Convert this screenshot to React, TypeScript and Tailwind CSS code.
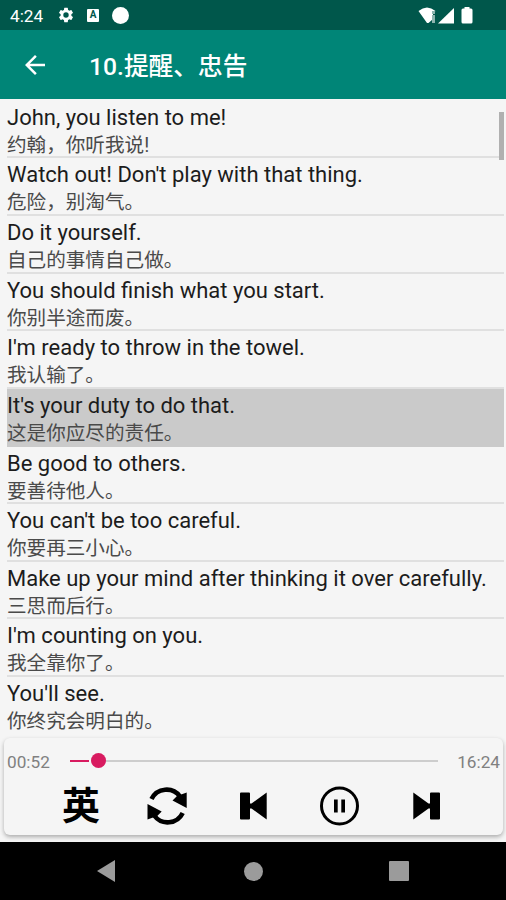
import React from 'react';

interface Sentence {
  en: string;
  zh: string;
}

const sentences: Sentence[] = [
  { en: 'John, you listen to me!', zh: '约翰，你听我说!' },
  { en: "Watch out! Don't play with that thing.", zh: '危险，别淘气。' },
  { en: 'Do it yourself.', zh: '自己的事情自己做。' },
  { en: 'You should finish what you start.', zh: '你别半途而废。' },
  { en: "I'm ready to throw in the towel.", zh: '我认输了。' },
  { en: "It's your duty to do that.", zh: '这是你应尽的责任。' },
  { en: 'Be good to others.', zh: '要善待他人。' },
  { en: "You can't be too careful.", zh: '你要再三小心。' },
  { en: 'Make up your mind after thinking it over carefully.', zh: '三思而后行。' },
  { en: "I'm counting on you.", zh: '我全靠你了。' },
  { en: "You'll see.", zh: '你终究会明白的。' },
];

const activeIndex = 5;

function StatusBar() {
  return (
    <div className="flex h-[30px] shrink-0 items-center bg-[#00574b] pl-[10px] pr-[33px] text-white">
      <span className="w-[46px] pt-[3px] text-[17.200px] leading-none">4:24</span>
      <svg className="ml-px h-[18px] w-[18px]" viewBox="0 0 24 24" fill="currentColor">
        <path d="M19.14 12.94c.04-.3.06-.61.06-.94s-.02-.64-.07-.94l2.03-1.58a.49.49 0 0 0 .12-.61l-1.92-3.32a.49.49 0 0 0-.59-.22l-2.39.96c-.5-.38-1.03-.7-1.62-.94l-.36-2.54a.48.48 0 0 0-.48-.41h-3.84a.47.47 0 0 0-.47.41l-.36 2.54c-.59.24-1.13.57-1.62.94l-2.39-.96a.48.48 0 0 0-.59.22L2.74 8.87a.47.47 0 0 0 .12.61l2.03 1.58c-.05.3-.09.63-.09.94s.02.64.07.94l-2.03 1.58a.49.49 0 0 0-.12.61l1.92 3.32c.12.22.37.29.59.22l2.39-.96c.5.38 1.03.7 1.62.94l.36 2.54c.05.24.24.41.48.41h3.84c.24 0 .44-.17.47-.41l.36-2.54c.59-.24 1.13-.56 1.62-.94l2.39.96c.22.08.47 0 .59-.22l1.92-3.32a.47.47 0 0 0-.12-.61zM12 15.6a3.6 3.6 0 1 1 0-7.2 3.6 3.6 0 0 1 0 7.2z" />
      </svg>
      <span className="ml-[12px] flex h-[13px] w-[12px] items-center justify-center rounded-[1px] bg-white text-[10px] font-bold leading-none text-[#00574b]">
        A
      </span>
      <span className="ml-[13px] h-[17px] w-[17px] rounded-full bg-white" />
      <svg className="ml-auto h-[18px] w-[56px]" viewBox="0 0 56 18">
        <path d="M1.500 5Q10 -2 18.500 5L16 7V13L11.500 17H10Z" fill="#fff" />
        <path d="M15 5h3v3h-3zM15 9h3v8h-3z" fill="#8fb5af" />
        <path d="M21 17.500L37 2V17.500Z" fill="#fff" />
        <path d="M47.500 1h5v1.500h1.500a1.500 1.500 0 0 1 1.500 1.500v12a1.500 1.500 0 0 1-1.500 1.500h-8a1.500 1.500 0 0 1-1.500-1.500v-12a1.500 1.500 0 0 1 1.500-1.500h1.500z" fill="#fff" />
      </svg>
    </div>
  );
}

function Toolbar() {
  return (
    <header className="flex h-[69px] shrink-0 items-center bg-[#008577] pl-[20px] text-white">
      <svg className="h-[30px] w-[30px]" viewBox="0 0 24 24" fill="currentColor">
        <path d="M20 11H7.830l5.590-5.590L12 4l-8 8 8 8 1.410-1.410L7.830 13H20v-2z" />
      </svg>
      <h1 className="ml-[39px] pt-[5px] text-[24.700px] font-medium leading-none">10.提醒、忠告</h1>
    </header>
  );
}

function SentenceRow({ sentence, active }: { sentence: Sentence; active: boolean }) {
  return (
    <li
      className={`h-[57.650px] border-b-2 pt-[3px] whitespace-nowrap last:border-transparent ${
        active ? 'border-[#cacaca] bg-[#cacaca]' : 'border-[#e0e0e0]'
      }`}
    >
      <p className="text-[22px] leading-[27px] text-[#1c1c1c]">{sentence.en}</p>
      <p className="mt-px text-[19.600px] leading-[28px] text-[#4a4a4a]">{sentence.zh}</p>
    </li>
  );
}

function Player() {
  return (
    <section className="ml-[4px] mr-[3px] h-[97px] shrink-0 rounded-[6px] bg-[#f5f5f5] shadow-[0_2px_4px_rgba(0,0,0,0.3)]">
      <div className="flex h-[45px] items-center pl-[3px] pr-[3px] text-[17.200px] text-[#808080]">
        <span className="w-[63px] pt-1">00:52</span>
        <div className="flex flex-1 items-center">
          <span className="h-[2px] w-[19px] bg-[#d81b60]" />
          <span className="ml-[2px] h-[15px] w-[15px] rounded-full bg-[#d81b60]" />
          <span className="h-[2px] flex-1 bg-[#cdcdcd]" />
        </div>
        <span className="w-[62px] pt-1 text-right">16:24</span>
      </div>
      <div className="flex h-[45px] items-center text-black">
        <button className="ml-[57px] w-[40px] text-[38px] font-bold leading-none">英</button>
        <svg className="ml-[46px] h-[40px] w-[40px]" viewBox="0 0 40 40">
          <path d="M4.500 13A16.700 16.700 0 0 1 33 10.500" fill="none" stroke="#000" strokeWidth="4.600" />
          <path d="M35.700 27A16.700 16.700 0 0 1 7.200 29.500" fill="none" stroke="#000" strokeWidth="4.600" />
          <path d="M39.700 6.500V22L25.500 14.500L30 10ZM.5 18L14.700 25.500L10.200 30L.5 33.500Z" />
        </svg>
        <svg className="ml-[52px] h-[28px] w-[28px]" viewBox="0 0 28 28">
          <path d="M2 .5H10Q11 .5 11 1.500V11.500H12.500L27.700 .5V27.500L12.500 16.500H11V26.500Q11 27.500 10 27.500H2Q1 27.500 1 26.500V1.500Q1 .5 2 .5Z" />
        </svg>
        <svg className="ml-[52px] h-[40px] w-[40px]" viewBox="0 0 40 40">
          <circle cx="20.500" cy="20" r="18" fill="none" stroke="#000" strokeWidth="3" />
          <path d="M15 13.500h3.700v13H15zM22.300 13.500h3.700v13h-3.700z" />
        </svg>
        <svg className="ml-[53px] h-[28px] w-[28px]" viewBox="0 0 28 28">
          <path d="M27 .5H19Q18 .5 18 1.500V11.500H16.500L1.300 .5V27.500L16.500 16.500H18V26.500Q18 27.500 19 27.500H27Q28 27.500 28 26.500V1.500Q28 .5 27 .5Z" />
        </svg>
      </div>
    </section>
  );
}

function NavigationBar() {
  return (
    <nav className="flex h-[58px] shrink-0 items-center bg-black">
      <svg className="ml-[97px] h-[22px] w-[18px]" viewBox="0 0 18 22">
        <path d="M0 11L18 0V22Z" fill="#9b9b9b" />
      </svg>
      <span className="ml-[129px] h-[19px] w-[19px] rounded-full bg-[#9b9b9b]" />
      <span className="ml-[126px] h-[20px] w-[20px] rounded-[1px] bg-[#9b9b9b]" />
    </nav>
  );
}

export default function App() {
  return (
    <div className="flex h-[900px] w-[506px] flex-col overflow-hidden bg-[#f5f5f5] font-['Roboto','Noto_Sans_CJK_SC',sans-serif]">
      <StatusBar />
      <Toolbar />
      <main className="relative h-[639px] shrink-0 overflow-hidden pl-[7px] pr-[2px] pt-[1.700px]">
        <ul>
          {sentences.map((sentence, index) => (
            <SentenceRow key={sentence.en} sentence={sentence} active={index === activeIndex} />
          ))}
        </ul>
        <span className="absolute right-[2px] top-[13px] h-[48px] w-[5px] bg-[#b0b0b0]" />
      </main>
      <Player />
      <div className="flex-1" />
      <NavigationBar />
    </div>
  );
}
